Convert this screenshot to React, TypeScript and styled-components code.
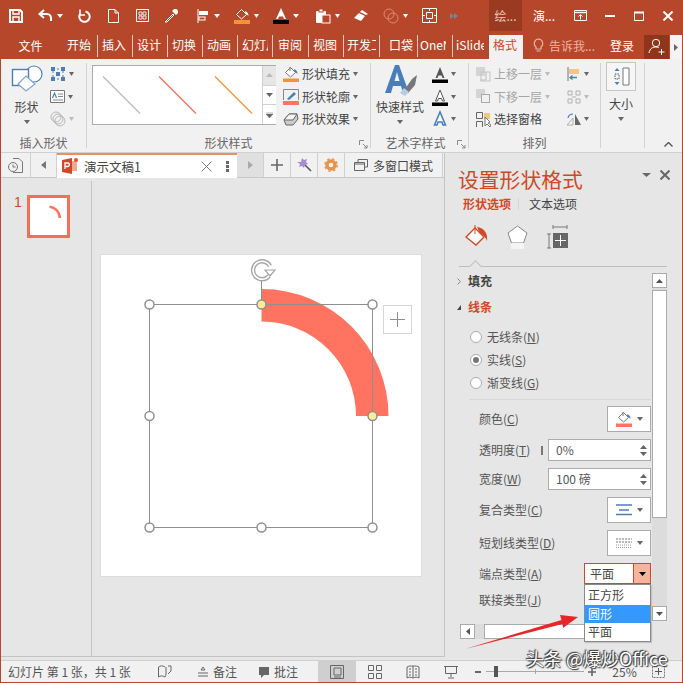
import {FC, ReactNode} from 'react'
import styled, {createGlobalStyle} from 'styled-components'

const RED = '#b7472a'
const ACCENT = '#d24726'
const BLUE = '#4a7ebb'

const Global = createGlobalStyle`
  html, body { margin: 0; padding: 0; }
  body { font-family: "Noto Sans CJK SC", "Liberation Sans", sans-serif; font-size: 12px; color: #444; }
  * { box-sizing: border-box; }
`

const Window = styled.div`
  position: relative;
  width: 683px;
  height: 683px;
  overflow: hidden;
  border: 1px solid ${RED};
  border-top: 0;
  background: #e6e6e6;
  display: flex;
  flex-direction: column;
`

/* title bar */
const TitleBar = styled.div`
  height: 31px;
  flex: none;
  background: ${RED};
  display: flex;
  align-items: stretch;
  color: #fff;
`
const QatSlot = styled.div<{$w: number; $gap?: number}>`
  width: ${p => p.$w}px;
  flex: none;
  display: flex;
  align-items: center;
  justify-content: center;
  gap: ${p => p.$gap ?? 4}px;
`
const Spacer = styled.div`
  flex: 1;
`
const TitleTab = styled.div<{$w: number; $active?: boolean}>`
  width: ${p => p.$w}px;
  flex: none;
  display: flex;
  align-items: center;
  justify-content: center;
  font-size: 12px;
  background: ${p => (p.$active ? '#9a3a21' : 'transparent')};
  color: ${p => (p.$active ? '#e8c9bd' : '#fff')};
`

/* ribbon tabs */
const TabStrip = styled.div`
  height: 28px;
  flex: none;
  background: ${RED};
  display: flex;
  align-items: flex-end;
  color: #fff;
  position: relative;
`
const FileTab = styled.div`
  width: 61px;
  height: 24px;
  padding: 0 2px 3px 0;
  display: flex;
  align-items: center;
  justify-content: center;
  flex: none;
  line-height: 1;
`
const RibbonTab = styled.div<{$w: number; $pl?: number; $sep?: boolean}>`
  width: ${p => p.$w}px;
  flex: none;
  height: 22px;
  margin-bottom: 2px;
  padding: 0 0 3px ${p => p.$pl ?? 4}px;
  display: flex;
  align-items: center;
  white-space: nowrap;
  overflow: hidden;
  line-height: 1;
  border-right: ${p => (p.$sep === false ? '0' : '1px solid #e6c8bf')};
`
const ClipText = styled.span<{$w: number}>`
  width: ${p => p.$w}px;
  flex: none;
  overflow: hidden;
`
const ActiveTab = styled.div`
  width: 34px;
  height: 24px;
  margin-left: 1px;
  flex: none;
  background: #f1f1f1;
  color: ${ACCENT};
  display: flex;
  align-items: center;
  justify-content: center;
  padding: 0 2px 4px 0;
  line-height: 1;
`
const TellMe = styled.div`
  width: 82px;
  height: 24px;
  padding: 0 0 3px 10px;
  display: flex;
  align-items: center;
  gap: 5px;
  color: #eab5a3;
  flex: none;
  white-space: nowrap;
  line-height: 1;
`
const SignIn = styled.div`
  width: 39px;
  height: 24px;
  padding: 0 5px 3px 0;
  display: flex;
  align-items: center;
  justify-content: center;
  flex: none;
  line-height: 1;
`
const ShareBox = styled.div`
  width: 25px;
  height: 24px;
  background: #8f3519;
  display: flex;
  align-items: center;
  justify-content: center;
  flex: none;
`
const ExpandBox = styled.div`
  width: 12px;
  height: 24px;
  margin-left: 1px;
  background: #f4f4f4;
  display: flex;
  align-items: center;
  justify-content: center;
  flex: none;
`

/* ribbon */
const Ribbon = styled.div`
  height: 94px;
  flex: none;
  background: #f1f1f1;
  display: flex;
  border-bottom: 1px solid #d0d0d0;
  position: relative;
`
const Group = styled.div<{$w: number}>`
  position: relative;
  width: ${p => p.$w}px;
  flex: none;
  height: 85px;
  margin-top: 4px;
  border-right: 1px solid #d2d2d2;
  display: flex;
  flex-direction: column;
`
const GroupBody = styled.div<{$pl?: number}>`
  height: 73px;
  flex: none;
  display: flex;
  padding-left: ${p => p.$pl ?? 0}px;
`
const GroupLabel = styled.div`
  height: 12px;
  font-size: 12px;
  line-height: 14px;
  color: #666;
  text-align: center;
  white-space: nowrap;
`
const Launcher = styled.div`
  position: absolute;
  right: 2px;
  bottom: -1px;
  width: 9px;
  height: 9px;
  display: flex;
`
const BigButton = styled.div<{$w: number}>`
  width: ${p => p.$w}px;
  flex: none;
  display: flex;
  flex-direction: column;
  align-items: center;
  color: #444;
  white-space: nowrap;
`
const BigIcon = styled.div`
  height: 36px;
  padding-top: 2px;
  display: flex;
  align-items: flex-start;
  justify-content: center;
`
const BigLabel = styled.div`
  height: 16px;
  line-height: 16px;
`
const BigCaret = styled.div`
  height: 14px;
  display: flex;
  align-items: center;
`
const Stack = styled.div<{$ml?: number}>`
  display: flex;
  flex-direction: column;
  margin-left: ${p => p.$ml ?? 0}px;
`
const SmallRow = styled.div<{$disabled?: boolean}>`
  height: 22.5px;
  display: flex;
  align-items: center;
  gap: 3px;
  white-space: nowrap;
  color: ${p => (p.$disabled ? '#a6a6a6' : '#444')};
`
const RowText = styled.span<{$w?: number}>`
  width: ${p => p.$w ?? 48}px;
  flex: none;
  line-height: 1;
`
const Gallery = styled.div`
  width: 184px;
  height: 60px;
  margin-top: 2px;
  border: 1px solid #ababab;
  background: #fff;
  display: flex;
  flex: none;
`
const GalleryLines = styled.div`
  flex: 1;
  display: flex;
`
const GalleryScroll = styled.div`
  width: 14px;
  flex: none;
  border-left: 1px solid #d0d0d0;
  display: flex;
  flex-direction: column;
`
const GalleryBtn = styled.div<{$dim?: boolean}>`
  flex: 1;
  display: flex;
  align-items: center;
  justify-content: center;
  background: ${p => (p.$dim ? '#e6e6e6' : '#fff')};
  & + & {
    border-top: 1px solid #d0d0d0;
  }
`
const SizeBox = styled.div`
  width: 30px;
  height: 29px;
  margin: -1px 0 5px;
  flex: none;
  border: 1px solid #c6c6c6;
  background: #f6f6f6;
  display: flex;
  align-items: center;
  justify-content: center;
`
const CollapseCell = styled.div`
  flex: 1;
  display: flex;
  align-items: flex-end;
  justify-content: flex-end;
  padding: 0 9px 5px 0;
`

/* main */
const Body = styled.div`
  flex: 1;
  display: flex;
  min-height: 0;
`
const LeftColumn = styled.div`
  width: 444px;
  flex: none;
  margin-bottom: 3px;
  border-right: 1px solid #c4c4c4;
  border-bottom: 1px solid #c4c4c4;
  display: flex;
  flex-direction: column;
`
const DocTabs = styled.div`
  height: 25px;
  flex: none;
  background: #f1f1f1;
  border-bottom: 1px solid #c8c8c8;
  display: flex;
`
const DocCell = styled.div<{$w: number; $dim?: boolean}>`
  width: ${p => p.$w}px;
  flex: none;
  display: flex;
  align-items: center;
  justify-content: center;
  gap: 5px;
  border-right: 1px solid #d0d0d0;
  background: ${p => (p.$dim ? '#e0e0e0' : 'transparent')};
  font-size: 12px;
`
const DocTab = styled.div`
  width: 180px;
  flex: none;
  background: #fff;
  border-top: 2px solid #e8915e;
  margin-bottom: -1px;
  display: flex;
  align-items: center;
  padding: 0 8px 1px 5px;
  gap: 14px;
`
const DocTitle = styled.span`
  flex: 1;
  margin-left: -9px;
  font-size: 12.5px;
  color: #444;
`
const Workspace = styled.div`
  flex: 1;
  display: flex;
  min-height: 0;
`
const ThumbPane = styled.div`
  width: 91px;
  flex: none;
  margin-top: 3px;
  border-right: 1px solid #c4c4c4;
  padding: 14px 0 0 13px;
  display: flex;
  gap: 5px;
  align-items: flex-start;
`
const ThumbNo = styled.span`
  font-size: 14px;
  line-height: 14px;
  color: ${ACCENT};
  font-family: "Liberation Sans", sans-serif;
`
const Thumb = styled.div`
  width: 43px;
  height: 43px;
  border: 3px solid #f0705a;
  background: #fff;
  display: flex;
`
const Stage = styled.div`
  flex: 1;
  padding: 77px 0 0 9px;
`
const Slide = styled.div`
  position: relative;
  width: 320px;
  height: 321px;
  background: #fff;
  box-shadow: 0 0 0 1px #dcdcdc;
  display: flex;
`
const AddButton = styled.div`
  position: absolute;
  left: 282px;
  top: 50px;
  width: 29px;
  height: 29px;
  border: 1px solid #d6d6d6;
  background: #fff;
  display: flex;
  align-items: center;
  justify-content: center;
`

/* format panel */
const Panel = styled.div`
  flex: 1;
  display: flex;
  flex-direction: column;
`
const PanelHead = styled.div`
  height: 40px;
  padding: 12px 12px 0 13px;
  display: flex;
  justify-content: space-between;
  flex: none;
`
const PanelTitle = styled.div`
  font-size: 20.8px;
  line-height: 28px;
  color: ${ACCENT};
  white-space: nowrap;
`
const PanelClose = styled.div`
  display: flex;
  align-items: center;
  gap: 9px;
  height: 20px;
  margin-top: 0;
`
const OptionTabs = styled.div`
  padding-left: 18px;
  height: 21px;
  flex: none;
  display: flex;
  align-items: center;
`
const OptionTab = styled.div<{$active?: boolean}>`
  font-weight: ${p => (p.$active ? 700 : 400)};
  color: ${p => (p.$active ? ACCENT : '#444')};
  width: ${p => (p.$active ? 55 : 52)}px;
  padding-left: ${p => (p.$active ? 0 : 10)}px;
  border-left: ${p => (p.$active ? '0' : '1px solid #d6d6d6')};
  white-space: nowrap;
  line-height: 1;
  box-sizing: content-box;
`
const CategoryIcons = styled.div`
  height: 52px;
  padding: 11px 0 0 20px;
  flex: none;
  display: flex;
  gap: 18px;
`
const NotchLine = styled.div`
  position: relative;
  height: 1px;
  flex: none;
  margin: 0 15px 0 14px;
  background: #bdbdbd;
  &::before {
    content: '';
    position: absolute;
    left: 12px;
    top: -4px;
    width: 8px;
    height: 8px;
    background: #e6e6e6;
    border-left: 1px solid #bdbdbd;
    border-top: 1px solid #bdbdbd;
    transform: rotate(45deg);
  }
`
const PanelBody = styled.div`
  height: 354px;
  flex: none;
  display: flex;
`
const PanelContent = styled.div`
  width: 206px;
  flex: none;
  padding-top: 1px;
`
const SectionHead = styled.div<{$open?: boolean}>`
  height: 26px;
  display: flex;
  align-items: center;
  padding-left: 12px;
  gap: 7px;
  font-weight: 700;
  color: ${p => (p.$open ? ACCENT : '#444')};
  line-height: 1;
`
const Radios = styled.div`
  padding: 5px 0 0 25px;
  display: flex;
  flex-direction: column;
`
const RadioRow = styled.div`
  height: 23px;
  display: flex;
  align-items: center;
  gap: 5px;
  line-height: 1;
  color: #555;
`
const RadioDot = styled.span<{$on?: boolean}>`
  width: 12px;
  height: 12px;
  border-radius: 50%;
  background: #fff;
  border: 1px solid #ababab;
  position: relative;
  &::after {
    content: '';
    display: ${p => (p.$on ? 'block' : 'none')};
    position: absolute;
    inset: 2px;
    border-radius: 50%;
    background: #777;
  }
`
const Divider = styled.div`
  height: 1px;
  background: #d8d8d8;
  margin: 5px 0 6px 24px;
`
const FormRows = styled.div`
  display: flex;
  flex-direction: column;
  gap: 7px;
  padding-left: 34px;
`
const FormRow = styled.div<{$h: number}>`
  height: ${p => p.$h}px;
  display: flex;
  align-items: center;
  justify-content: space-between;
  color: #555;
  line-height: 1;
  white-space: nowrap;
`
const U = styled.span`
  text-decoration: underline;
`
const ColorButton = styled.div`
  width: 44px;
  height: 100%;
  border: 1px solid #ababab;
  background: #fff;
  display: flex;
  align-items: center;
  justify-content: center;
  gap: 5px;
`
const SpinWrap = styled.div`
  display: flex;
  align-items: center;
  gap: 5px;
  height: 100%;
`
const Tick = styled.span`
  width: 1px;
  height: 9px;
  border-left: 2px solid #777;
`
const SpinInput = styled.div`
  width: 103px;
  height: 100%;
  border: 1px solid #ababab;
  background: #fff;
  display: flex;
  align-items: center;
  justify-content: space-between;
  padding: 0 3px 0 7px;
  color: #555;
`
const SpinArrows = styled.div`
  display: flex;
  flex-direction: column;
  gap: 3px;
`
const Combo = styled.div`
  position: relative;
  width: 67px;
  height: 100%;
  border: 1px solid ${ACCENT};
  background: #fff;
  display: flex;
  color: #444;
`
const ComboText = styled.div`
  flex: 1;
  padding-left: 5px;
  display: flex;
  align-items: center;
`
const ComboBtn = styled.div`
  width: 17px;
  flex: none;
  border-left: 1px solid ${ACCENT};
  background: #f4b59c;
  display: flex;
  align-items: center;
  justify-content: center;
`
const Menu = styled.div`
  position: absolute;
  top: calc(100% + 1px);
  right: -1px;
  width: 67px;
  height: 58px;
  background: #fff;
  border: 1px solid #8a8a8a;
  box-shadow: 1px 1px 1px rgba(0, 0, 0, 0.15);
  padding-top: 1px;
  z-index: 3;
`
const MenuItem = styled.div<{$active?: boolean}>`
  height: 18.5px;
  padding-left: 3px;
  display: flex;
  align-items: center;
  line-height: 1;
  color: ${p => (p.$active ? '#fff' : '#444')};
  background: ${p => (p.$active ? '#3399ff' : 'transparent')};
`
const VScroll = styled.div`
  width: 15px;
  flex: none;
  margin: 6px 0 0 1px;
  height: 348px;
  background: #dcdcdc;
  display: flex;
  flex-direction: column;
`
const ScrollBtn = styled.div`
  width: 15px;
  height: 15px;
  flex: none;
  background: #fff;
  border: 1px solid #ababab;
  display: flex;
  align-items: center;
  justify-content: center;
`
const VThumb = styled.div`
  height: 228px;
  margin-top: 2px;
  flex: none;
  background: #fff;
  border: 1px solid #ababab;
`
const HScroll = styled.div`
  height: 15px;
  margin: 3px 0 0 15px;
  width: 192px;
  display: flex;
  background: #dcdcdc;
  flex: none;
`
const HThumb = styled.div`
  width: 110px;
  margin-left: 9px;
  background: #fff;
  border: 1px solid #ababab;
`

/* status bar */
const StatusBar = styled.div`
  height: 22px;
  flex: none;
  background: #f1f1f1;
  border-top: 1px solid #cfcfcf;
  display: flex;
  align-items: center;
  font-size: 12px;
  color: #555;
  white-space: nowrap;
`
const StatusCell = styled.div<{$w: number; $active?: boolean; $left?: boolean}>`
  width: ${p => p.$w}px;
  height: 100%;
  flex: none;
  display: flex;
  align-items: center;
  justify-content: ${p => (p.$left ? 'flex-start' : 'center')};
  padding-left: ${p => (p.$left ? 7 : 0)}px;
  gap: 4px;
  line-height: 1;
  background: ${p => (p.$active ? '#cfcfcf' : 'transparent')};
`
const ZoomTrack = styled.div`
  position: relative;
  width: 98px;
  height: 1px;
  background: #a8a8a8;
  flex: none;
  &::before {
    content: '';
    position: absolute;
    left: 8px;
    top: -5px;
    width: 4px;
    height: 11px;
    background: #555;
  }
  &::after {
    content: '';
    position: absolute;
    left: 49px;
    top: -2px;
    width: 1px;
    height: 5px;
    background: #a8a8a8;
  }
`

/* overlays */
const ArrowLayer = styled.div`
  position: absolute;
  left: 459px;
  top: 610px;
  width: 125px;
  height: 45px;
  display: flex;
  z-index: 4;
`
const Watermark = styled.div`
  position: absolute;
  left: 525px;
  top: 646px;
  font-size: 18px;
  line-height: 24px;
  color: #fff;
  white-space: nowrap;
  text-shadow: 0 0 2px #333, 1px 1px 1px #333, -1px -1px 1px #333;
  z-index: 5;
`

/* icons */
const S: FC<{w: number; h?: number; children: ReactNode}> = ({w, h, children}) => (
  <svg width={w} height={h ?? w} viewBox={`0 0 ${w} ${h ?? w}`} fill="none">
    {children}
  </svg>
)
const Caret: FC<{c?: string; w?: number}> = ({c = '#666', w = 7}) => (
  <S w={w} h={4}>
    <path d={`M0 0H${w}L${w / 2} 4Z`} fill={c} />
  </S>
)
const Up: FC<{c?: string}> = ({c = '#666'}) => (
  <S w={7} h={4}>
    <path d="M0 4H7L3.5 0Z" fill={c} />
  </S>
)
const Fill: FC<{bar: string}> = ({bar}) => (
  <S w={16}>
    <path d="M7.500 1.500 L12.500 6.500 L7.500 11 L2.500 6.500Z" fill="#fff" stroke="#777" />
    <path d="M7 1V5" stroke="#777" />
    <path d="M11 3c3 1 3.600 3 3.400 5-1-1-2-2-3-2.500Z" fill={BLUE} />
    <rect x="0" y="12.500" width="16" height="3.500" fill={bar} />
  </S>
)
const LineA: FC<{outline?: boolean; glow?: boolean}> = ({outline, glow}) => (
  <S w={16} h={18}>
    {glow ? (
      <path d="M8 2 L2.500 15H5L6 12H10L11 15H13.500Z" fill="#fff" stroke={BLUE} strokeWidth={1.6} />
    ) : (
      <>
        <path
          d="M8 2 L3.500 13H5.500L6.500 10.500H9.500L10.500 13H12.500Z"
          fill={outline ? '#fff' : '#555'}
          stroke={outline ? '#555' : 'none'}
        />
        <rect y="14.500" width="16" height="3.500" fill="#000" />
      </>
    )}
  </S>
)
const LauncherIcon: FC = () => (
  <S w={9}>
    <path d="M.500 5V.500H5M4 4 L8 8M5 8H8V5" stroke="#888" />
  </S>
)

const handles = [
  [48.5, 49.5],
  [271.5, 49.5],
  [48.5, 161],
  [48.5, 272.5],
  [160.5, 272.5],
  [271.5, 272.5],
]

const App: FC = () => (
  <Window>
    <Global />
    <TitleBar>
      <QatSlot $w={30}>
        <S w={14}>
          <path d="M1 1H11L13 3V13H1Z" stroke="#fff" strokeWidth={2} />
          <path d="M4 1V5H10V1M4 13V8H10V13" stroke="#fff" strokeWidth={1.4} />
        </S>
      </QatSlot>
      <QatSlot $w={38}>
        <S w={15} h={13}>
          <path d="M6 1 L1.500 5 L6 9" stroke="#fff" strokeWidth={2} />
          <path d="M2 5H9C12.500 5 13.500 8 13 12" stroke="#fff" strokeWidth={2} />
        </S>
        <Caret c="#fff" w={6} />
      </QatSlot>
      <QatSlot $w={30}>
        <S w={14}>
          <path d="M8.500 2.500A5.200 5.200 0 1 1 3 5" stroke="#fff" strokeWidth={2} />
          <path d="M3 0.500V6H8" stroke="#fff" strokeWidth={1.6} />
        </S>
      </QatSlot>
      <QatSlot $w={28}>
        <S w={11} h={14}>
          <path d="M.500.500H7L10.500 4V13.500H.500ZM7 .500V4H10.500" stroke="#fff" />
        </S>
      </QatSlot>
      <QatSlot $w={30}>
        <S w={13}>
          <path d="M.500.500H12.500V12.500H.500Z" stroke="#fff" />
          <path d="M3 3H6V6H3ZM7 3H10V6H7ZM3 7H6V10H3ZM7 7H10V10H7Z" stroke="#fff" strokeWidth={0.8} />
        </S>
      </QatSlot>
      <QatSlot $w={28}>
        <S w={15}>
          <path d="M9 6 L2 13 L1 14 L3 14 L10 7Z" stroke="#fff" fill="none" />
          <path d="M8 3 L12 7 L14 5 L14 2.500 L12.500 1 L10 1Z" fill="#fff" />
        </S>
      </QatSlot>
      <QatSlot $w={46}>
        <S w={13} h={14}>
          <path d="M1 0V14" stroke="#fff" />
          <rect x="2" y="2" width="9" height="4" fill="#fff" />
          <rect x="2" y="8" width="6" height="3" fill="none" stroke="#fff" />
        </S>
        <Caret c="#fff" w={6} />
      </QatSlot>
      <QatSlot $w={30}>
        <S w={16}>
          <path d="M7.500 1.500 L12.500 6.500 L7.500 11 L2.500 6.500Z" fill="none" stroke="#fff" />
          <path d="M11 3c3 1 3.600 3 3.400 5-1-1-2-2-3-2.500Z" fill="#fff" />
          <rect y="12" width="16" height="4" fill="#f29436" />
        </S>
        <Caret c="#fff" w={5} />
      </QatSlot>
      <QatSlot $w={50}>
        <S w={16}>
          <path d="M8 0 L3 11H5L6 8.500H10L11 11H13Z" fill="#fff" />
          <rect y="12" width="16" height="4" fill="#000" />
        </S>
        <Caret c="#fff" w={6} />
      </QatSlot>
      <QatSlot $w={32}>
        <S w={16}>
          <rect x="1" y="3" width="10" height="12" rx="1" fill="#fff" />
          <rect x="4" y="1" width="4" height="3" fill="#fff" stroke={RED} />
          <rect x="7" y="7" width="8" height="8" fill={RED} stroke="#fff" />
        </S>
        <Caret c="#fff" w={5} />
      </QatSlot>
      <QatSlot $w={36}>
        <S w={16} h={13}>
          <path d="M9 1 L15 5 L13 6 L7 3Z" fill="#fff" />
          <path d="M6 4 L12 7 L8 12 L1 9Z" fill="#fff" />
        </S>
      </QatSlot>
      <QatSlot $w={32}>
        <S w={16}>
          <circle cx="6" cy="6" r="5" stroke="#d98b74" />
          <circle cx="10" cy="10" r="5" stroke="#d98b74" />
        </S>
        <Caret c="#fff" w={5} />
      </QatSlot>
      <QatSlot $w={36}>
        <S w={15}>
          <path d="M.500.500H14.500V14.500H.500Z" stroke="#fff" />
          <path d="M4.500 4.500H10.500V10.500H4.500Z" stroke="#fff" />
          <path d="M7.500 1V3M7.500 12V14M1 7.500H3M12 7.500H14" stroke="#fff" />
        </S>
      </QatSlot>
      <QatSlot $w={14} $gap={0}>
        <S w={8}>
          <path d="M0 1 L4 4 L0 7ZM4 1 L8 4 L4 7Z" fill="#6f8a94" />
        </S>
      </QatSlot>
      <Spacer />
      <TitleTab $w={33} $active>
        绘...
      </TitleTab>
      <TitleTab $w={44}>演...</TitleTab>
      <QatSlot $w={29}>
        <S w={13} h={11}>
          <path d="M.500.500H12.500V10.500H.500Z" stroke="#fff" />
          <path d="M.500 2.500H12.500" stroke="#fff" strokeWidth={1.4} />
          <path d="M6.500 9.500V5M4.500 6.500 L6.500 4.500 L8.500 6.500" stroke="#fff" />
        </S>
      </QatSlot>
      <QatSlot $w={29}>
        <S w={10} h={2}>
          <rect width="10" height="2" fill="#fff" />
        </S>
      </QatSlot>
      <QatSlot $w={29}>
        <S w={10} h={10}>
          <path d="M.500 1.500H9.500V9.500H.500Z" stroke="#fff" />
          <path d="M0 1.500H10" stroke="#fff" strokeWidth={2} />
        </S>
      </QatSlot>
      <QatSlot $w={29}>
        <S w={10}>
          <path d="M.500.500 L9.500 9.500M9.500.500 L.500 9.500" stroke="#fff" strokeWidth={2} />
        </S>
      </QatSlot>
    </TitleBar>

    <TabStrip>
      <FileTab>文件</FileTab>
      <RibbonTab $w={36} $pl={5}>开始</RibbonTab>
      <RibbonTab $w={35}>插入</RibbonTab>
      <RibbonTab $w={35}>设计</RibbonTab>
      <RibbonTab $w={35}>切换</RibbonTab>
      <RibbonTab $w={35}>动画</RibbonTab>
      <RibbonTab $w={35}>
        <ClipText $w={26}>幻灯片</ClipText>
      </RibbonTab>
      <RibbonTab $w={36} $pl={5}>审阅</RibbonTab>
      <RibbonTab $w={35}>视图</RibbonTab>
      <RibbonTab $w={36} $pl={3}>
        <ClipText $w={29}>开发工</ClipText>
      </RibbonTab>
      <RibbonTab $w={38} $pl={9}>口袋</RibbonTab>
      <RibbonTab $w={35} $pl={2}>
        <ClipText $w={26}>OneNote</ClipText>
      </RibbonTab>
      <RibbonTab $w={35} $pl={3} $sep={false}>
        <ClipText $w={28}>iSlide</ClipText>
      </RibbonTab>
      <ActiveTab>格式</ActiveTab>
      <TellMe>
        <S w={11} h={15}>
          <path
            d="M5.500 1A4.500 4.500 0 0 1 8 9V11H3V9A4.500 4.500 0 0 1 5.500 1ZM3.500 13H7.500"
            stroke="#eab5a3"
            strokeWidth={1.2}
          />
        </S>
        告诉我...
      </TellMe>
      <SignIn>登录</SignIn>
      <ShareBox>
        <S w={18}>
          <circle cx="8" cy="5" r="3.700" stroke="#fff" />
          <path d="M1 15C2 10 5 9 8 9C9.500 9 10.500 9.500 11 10" stroke="#fff" />
          <path d="M13.500 11V17M10.500 14H16.500" stroke="#fff" />
        </S>
      </ShareBox>
      <ExpandBox>
        <S w={4} h={7}>
          <path d="M0 0 L4 3.500 L0 7Z" fill="#666" />
        </S>
      </ExpandBox>
    </TabStrip>

    <Ribbon>
      <Group $w={86}>
        <GroupBody $pl={2}>
          <BigButton $w={47}>
            <BigIcon>
              <S w={32} h={27}>
                <circle cx="23" cy="9" r="8" fill="#fff" stroke={BLUE} strokeWidth={1.2} />
                <rect x="1.500" y="4.500" width="16" height="16" fill="#fff" stroke={BLUE} strokeWidth={1.4} />
                <path d="M15 11 L24 19 L15 26 L7 19Z" fill="#fff" stroke="#7ea6d4" strokeWidth={1.2} />
              </S>
            </BigIcon>
            <BigLabel>形状</BigLabel>
            <BigCaret>
              <Caret w={6} />
            </BigCaret>
          </BigButton>
          <Stack>
            <SmallRow>
              <S w={16}>
                <path d="M3 3H13V13H3Z" stroke={BLUE} strokeDasharray="2 2" />
                <path d="M1 1H5V5H1ZM11 1H15V5H11ZM1 11H5V15H1ZM11 11H15V15H11ZM6 6H10V10H6Z" fill={BLUE} />
              </S>
              <Caret w={5} />
            </SmallRow>
            <SmallRow>
              <S w={15} h={13}>
                <path d="M.500.500H14.500V12.500H.500Z" stroke="#777" fill="#fff" />
                <path d="M2.500 8 L4.500 3 L6.500 8" stroke={BLUE} strokeWidth={1.2} />
                <path d="M8 4H13M8 6.500H13M3 10H13" stroke="#888" />
              </S>
              <Caret w={5} />
            </SmallRow>
            <SmallRow>
              <S w={16}>
                <circle cx="6" cy="6" r="5" stroke="#b8b8b8" />
                <circle cx="10" cy="10" r="5" stroke="#b8b8b8" />
                <circle cx="8" cy="8" r="5" stroke="#b8b8b8" />
              </S>
              <Caret c="#bbb" w={5} />
            </SmallRow>
          </Stack>
        </GroupBody>
        <GroupLabel>插入形状</GroupLabel>
      </Group>

      <Group $w={284}>
        <GroupBody $pl={5}>
          <Gallery>
            <GalleryLines>
              <S w={169} h={58}>
                <path d="M10 10.500 L47 47.500" stroke="#bdbdbd" strokeWidth={1.4} />
                <path d="M66 10.500 L103 47.500" stroke="#ff7360" strokeWidth={1.4} />
                <path d="M122 10.500 L159 47.500" stroke="#f79a3a" strokeWidth={1.4} />
              </S>
            </GalleryLines>
            <GalleryScroll>
              <GalleryBtn $dim>
                <Up c="#bbb" />
              </GalleryBtn>
              <GalleryBtn>
                <Caret />
              </GalleryBtn>
              <GalleryBtn>
                <S w={7} h={6}>
                  <path d="M0 0H7M0 2H7L3.500 6Z" fill="#666" stroke="#666" strokeWidth={0.5} />
                </S>
              </GalleryBtn>
            </GalleryScroll>
          </Gallery>
          <Stack $ml={7}>
            <SmallRow>
              <Fill bar="#f29436" />
              <RowText>形状填充</RowText>
              <Caret w={5} />
            </SmallRow>
            <SmallRow>
              <S w={16}>
                <path d="M.500.500H15.500V11" stroke="#888" />
                <path d="M.500.500V11" stroke="#888" />
                <path d="M4 10 L11 3 L13 5 L6 11Z" fill={BLUE} />
                <rect y="12" width="16" height="4" fill="#ff7360" />
              </S>
              <RowText>形状轮廓</RowText>
              <Caret w={5} />
            </SmallRow>
            <SmallRow>
              <S w={16}>
                <path d="M1 9 L6 3H14 L15 8 L10 14H3Z" fill="#ccc" stroke="#666" />
                <path d="M6 3 L14 3 L10 9 L1 9Z" fill="#f4f4f4" stroke="#666" />
              </S>
              <RowText>形状效果</RowText>
              <Caret w={5} />
            </SmallRow>
          </Stack>
        </GroupBody>
        <GroupLabel>形状样式</GroupLabel>
        <Launcher>
          <LauncherIcon />
        </Launcher>
      </Group>

      <Group $w={98}>
        <GroupBody $pl={1}>
          <BigButton $w={56}>
            <BigIcon>
              <S w={36} h={32}>
                <path d="M13 0 L3 28H9L11 21H19L21 28H27L17 0ZM12.500 16 L15 7 L17.500 16Z" fill={BLUE} />
                <path d="M35 10 L30 14 L23 24 L27 27 L33 20Z" fill="#777" />
                <path d="M18 28 L22 23 L27 27 L23 31Z" fill="#b7cce6" />
              </S>
            </BigIcon>
            <BigLabel>快速样式</BigLabel>
            <BigCaret>
              <Caret w={6} />
            </BigCaret>
          </BigButton>
          <Stack $ml={4}>
            <SmallRow>
              <LineA />
              <Caret w={5} />
            </SmallRow>
            <SmallRow>
              <LineA outline />
              <Caret w={5} />
            </SmallRow>
            <SmallRow>
              <LineA glow />
              <Caret w={5} />
            </SmallRow>
          </Stack>
        </GroupBody>
        <GroupLabel>艺术字样式&nbsp;&nbsp;&nbsp;</GroupLabel>
        <Launcher>
          <LauncherIcon />
        </Launcher>
      </Group>

      <Group $w={132}>
        <GroupBody $pl={7}>
          <Stack>
            <SmallRow $disabled>
              <S w={15}>
                <rect width="9" height="9" fill="#d4d4d4" />
                <path d="M10 5V13H4" stroke="#bbb" />
                <rect x="5" y="5" width="9" height="9" stroke="#c4c4c4" />
              </S>
              <RowText>上移一层</RowText>
              <Caret c="#bbb" w={5} />
            </SmallRow>
            <SmallRow $disabled>
              <S w={15}>
                <rect width="9" height="9" fill="#d4d4d4" />
                <rect x="5.500" y="5.500" width="8" height="8" fill="#f1f1f1" stroke="#a8a8a8" />
              </S>
              <RowText>下移一层</RowText>
              <Caret c="#bbb" w={5} />
            </SmallRow>
            <SmallRow>
              <S w={15}>
                <path d="M.500.500H6.500V6.500H.500ZM.500 9.500H6.500V15.500H.500Z" stroke="#666" />
                <rect x="8" y="1" width="6" height="6" fill="#f3c67f" />
                <path d="M9 5V14 L11 12 L14 15 L15 13 L12 11 L14 10Z" fill="#fff" stroke="#777" />
              </S>
              <RowText>选择窗格</RowText>
            </SmallRow>
          </Stack>
          <Stack $ml={17}>
            <SmallRow>
              <S w={14}>
                <path d="M1 0V14" stroke="#777" />
                <rect x="2" y="2" width="10" height="5" fill="#f3c67f" />
                <path d="M10 10.500H3M5.500 8.500 L3 10.500 L5.500 12.500" stroke={BLUE} strokeWidth={1.3} />
              </S>
              <Caret w={5} />
            </SmallRow>
            <SmallRow>
              <S w={14}>
                <path d="M1 1H5V5H1ZM9 1H13V5H9ZM1 9H5V13H1ZM9 9H13V13H9Z" stroke="#b0b0b0" />
                <path d="M5 7H9" stroke="#b0b0b0" />
              </S>
              <Caret c="#bbb" w={5} />
            </SmallRow>
            <SmallRow>
              <S w={14}>
                <path d="M8 2 L14 13H8Z" fill="#666" />
                <path d="M6 6V13H0Z" stroke="#b0b0b0" />
                <path d="M1 6C1.500 3 3 2 6 2" stroke={BLUE} strokeWidth={1.2} />
              </S>
              <Caret w={5} />
            </SmallRow>
          </Stack>
        </GroupBody>
        <GroupLabel>排列</GroupLabel>
      </Group>

      <Group $w={44}>
        <GroupBody $pl={5}>
          <BigButton $w={30}>
            <SizeBox>
              <S w={17} h={19}>
                <path d="M10 1H16V18H10Z" stroke="#777" fill="#fff" />
                <path d="M4 1 L6.500 4H1.500ZM4 18 L6.500 15H1.500Z" fill={BLUE} />
                <path d="M2 7H6V12H2Z" stroke="#555" strokeDasharray="1.500 1" />
              </S>
            </SizeBox>
            <BigLabel>大小</BigLabel>
            <BigCaret>
              <Caret w={6} />
            </BigCaret>
          </BigButton>
        </GroupBody>
      </Group>
      <CollapseCell>
        <S w={9} h={5}>
          <path d="M.500 4.500 L4.500 .500 L8.500 4.500" stroke="#555" strokeWidth={1.4} />
        </S>
      </CollapseCell>
    </Ribbon>

    <Body>
      <LeftColumn>
        <DocTabs>
          <DocCell $w={30}>
            <S w={15}>
              <path d="M5 .500H11L14.500 4V14.500H5" stroke="#777" />
              <circle cx="5" cy="9" r="4.500" fill="#f1f1f1" stroke="#777" />
              <path d="M5 6.500V9H7.500" stroke="#777" />
            </S>
          </DocCell>
          <DocCell $w={26}>
            <S w={5} h={8}>
              <path d="M5 0 L0 4 L5 8Z" fill="#777" />
            </S>
          </DocCell>
          <DocTab>
            <S w={17}>
              <path d="M0 2 L10 0V16 L0 14Z" fill="#d24726" />
              <path d="M10 3H15V13H10Z" fill="#f3a98e" />
              <path d="M3 11V5H6A1.800 1.800 0 0 1 6 8.500H3" stroke="#fff" strokeWidth={1.3} />
              <circle cx="14" cy="2" r="2" fill="#e8501f" />
            </S>
            <DocTitle>演示文稿1</DocTitle>
            <S w={11}>
              <path d="M.500.500 L10.500 10.500M10.500.500 L.500 10.500" stroke="#777" />
            </S>
            <S w={3} h={11}>
              <path d="M0 0H3V3H0ZM0 4H3V7H0ZM0 8H3V11H0Z" fill="#666" />
            </S>
          </DocTab>
          <DocCell $w={27} $dim>
            <S w={5} h={8}>
              <path d="M0 0 L5 4 L0 8Z" fill="#aaa" />
            </S>
          </DocCell>
          <DocCell $w={27}>
            <S w={12}>
              <path d="M6 0V12M0 6H12" stroke="#666" strokeWidth={1.6} />
            </S>
          </DocCell>
          <DocCell $w={27}>
            <S w={16}>
              <path d="M9 8 L15 14" stroke="#555" strokeWidth={1.6} />
              <path d="M6 1 L8 3 L11 2 L10 5 L12 7 L9 8 L8 11 L6 9 L3 10 L4 7 L1 5 L5 5Z" fill="#a98ad6" />
            </S>
          </DocCell>
          <DocCell $w={27}>
            <S w={14}>
              <circle cx="7" cy="7" r="4" stroke="#e8934a" strokeWidth={3.4} />
              <circle cx="7" cy="7" r="6.200" stroke="#e8934a" strokeWidth={1.4} strokeDasharray="2.500 2.400" />
            </S>
          </DocCell>
          <DocCell $w={98}>
            <S w={14} h={12}>
              <path d="M4 3V.500H13.500V8H10.500" stroke="#666" />
              <path d="M.500 3.500H10.500V11.500H.500Z" stroke="#666" />
              <path d="M.500 5H10.500" stroke="#666" />
            </S>
            多窗口模式
          </DocCell>
        </DocTabs>
        <Workspace>
          <ThumbPane>
            <ThumbNo>1</ThumbNo>
            <Thumb>
              <S w={37}>
                <path d="M19.500 7.500A12.500 12.500 0 0 1 31 20H28.500A10 10 0 0 0 19.500 10Z" fill="#ff7360" />
              </S>
            </Thumb>
          </ThumbPane>
          <Stage>
            <Slide>
              <S w={320} h={321}>
                <path d="M160.500 34A127 127 0 0 1 287.500 161H255A94.500 94.500 0 0 0 160.500 66.500Z" fill="#ff7360" />
                <path d="M48.500 49.500H271.500V272.500H48.500Z" stroke="#8f8f8f" strokeWidth={1} />
                <path d="M160.500 49V24" stroke="#8f8f8f" />
                <path d="M168 21A9 9 0 1 1 169 11" stroke="#a6a6a6" strokeWidth={4.4} />
                <path d="M168 21A9 9 0 1 1 169 11" stroke="#fff" strokeWidth={1.6} />
                <path d="M164 15H174L169 21Z" fill="#fff" stroke="#a6a6a6" strokeWidth={1.2} />
                {handles.map(([x, y]) => (
                  <circle key={`${x}-${y}`} cx={x} cy={y} r={4.5} fill="#fff" stroke="#8f8f8f" strokeWidth={1.5} />
                ))}
                <circle cx="160.500" cy="49.500" r="4.500" fill="#ffec99" stroke="#8f8f8f" strokeWidth={1.5} />
                <circle cx="271.500" cy="161" r="4.500" fill="#ffec99" stroke="#8f8f8f" strokeWidth={1.5} />
              </S>
              <AddButton>
                <S w={15}>
                  <path d="M7.500 0V15M0 7.500H15" stroke="#8f8f8f" />
                </S>
              </AddButton>
            </Slide>
          </Stage>
        </Workspace>
      </LeftColumn>

      <Panel>
        <PanelHead>
          <PanelTitle>设置形状格式</PanelTitle>
          <PanelClose>
            <Caret w={9} />
            <S w={10}>
              <path d="M.500.500 L9.500 9.500M9.500.500 L.500 9.500" stroke="#666" strokeWidth={2} />
            </S>
          </PanelClose>
        </PanelHead>
        <OptionTabs>
          <OptionTab $active>形状选项</OptionTab>
          <OptionTab>文本选项</OptionTab>
        </OptionTabs>
        <CategoryIcons>
          <S w={24} h={24}>
            <path d="M10 3 L19 12 L11 20 L1 12Z" fill="#fff" stroke={ACCENT} strokeWidth={1.4} />
            <path d="M10 0V9" stroke={ACCENT} />
            <path d="M12 2C19 3 23 8 22 16C21 13 19 10 15 8Z" fill={ACCENT} />
          </S>
          <S w={21} h={24}>
            <path d="M10.500 1 L20 8 L16.500 18H4.500L1 8Z" fill="#fff" stroke="#888" />
            <path d="M4.500 18V24M16.500 18V24" stroke="#aaa" />
            <rect x="4" y="18" width="13" height="6" fill="#f4f4f4" />
          </S>
          <S w={22} h={24}>
            <path d="M7 2H21M7 0V4M21 0V4" stroke="#777" />
            <path d="M1 9H5M1 23H5M3 9V23" stroke="#777" />
            <rect x="7" y="8" width="15" height="15" fill="#666" />
            <path d="M14.500 10V21M9 15.500H20" stroke="#fff" />
          </S>
        </CategoryIcons>
        <NotchLine />
        <PanelBody>
          <PanelContent>
            <SectionHead>
              <S w={4} h={7}>
                <path d="M.500.500 L3.500 3.500 L.500 6.500" stroke="#888" />
              </S>
              填充
            </SectionHead>
            <SectionHead $open>
              <S w={4} h={7}>
                <path d="M4 1V6H0Z" fill="#444" />
              </S>
              线条
            </SectionHead>
            <Radios>
              <RadioRow>
                <RadioDot />
                <span>
                  无线条(<U>N</U>)
                </span>
              </RadioRow>
              <RadioRow>
                <RadioDot $on />
                <span>
                  实线(<U>S</U>)
                </span>
              </RadioRow>
              <RadioRow>
                <RadioDot />
                <span>
                  渐变线(<U>G</U>)
                </span>
              </RadioRow>
            </Radios>
            <Divider />
            <FormRows>
              <FormRow $h={26}>
                <span>
                  颜色(<U>C</U>)
                </span>
                <ColorButton>
                  <Fill bar="#ff7360" />
                  <Caret w={6} />
                </ColorButton>
              </FormRow>
              <FormRow $h={22}>
                <span>
                  透明度(<U>T</U>)
                </span>
                <SpinWrap>
                  <Tick />
                  <SpinInput>
                    0%
                    <SpinArrows>
                      <Up />
                      <Caret />
                    </SpinArrows>
                  </SpinInput>
                </SpinWrap>
              </FormRow>
              <FormRow $h={22}>
                <span>
                  宽度(<U>W</U>)
                </span>
                <SpinInput>
                  100 磅
                  <SpinArrows>
                    <Up />
                    <Caret />
                  </SpinArrows>
                </SpinInput>
              </FormRow>
              <FormRow $h={26}>
                <span>
                  复合类型(<U>C</U>)
                </span>
                <ColorButton>
                  <S w={16} h={12}>
                    <path d="M0 1H16M3 6H13M0 10.500H16" stroke={BLUE} strokeWidth={1.6} />
                  </S>
                  <Caret w={6} />
                </ColorButton>
              </FormRow>
              <FormRow $h={26}>
                <span>
                  短划线类型(<U>D</U>)
                </span>
                <ColorButton>
                  <S w={16} h={10}>
                    <path d="M0 1H16M0 4H16" stroke="#777" strokeDasharray="2 1" />
                    <path d="M0 7H16M0 9.500H16" stroke="#999" strokeDasharray="1 1" />
                  </S>
                  <Caret w={6} />
                </ColorButton>
              </FormRow>
              <FormRow $h={21}>
                <span>
                  端点类型(<U>A</U>)
                </span>
                <Combo>
                  <ComboText>平面</ComboText>
                  <ComboBtn>
                    <Caret c="#000" />
                  </ComboBtn>
                  <Menu>
                    <MenuItem>正方形</MenuItem>
                    <MenuItem $active>圆形</MenuItem>
                    <MenuItem>平面</MenuItem>
                  </Menu>
                </Combo>
              </FormRow>
              <FormRow $h={18}>
                <span>
                  联接类型(<U>J</U>)
                </span>
              </FormRow>
            </FormRows>
          </PanelContent>
          <VScroll>
            <ScrollBtn>
              <Up c="#555" />
            </ScrollBtn>
            <VThumb />
            <Spacer />
            <ScrollBtn>
              <Caret c="#555" />
            </ScrollBtn>
          </VScroll>
        </PanelBody>
        <HScroll>
          <ScrollBtn>
            <S w={4} h={7}>
              <path d="M4 0 L0 3.500 L4 7Z" fill="#555" />
            </S>
          </ScrollBtn>
          <HThumb />
        </HScroll>
      </Panel>
    </Body>

    <StatusBar>
      <StatusCell $w={149} $left>
        幻灯片 第 1 张，共 1 张
      </StatusCell>
      <StatusCell $w={30}>
        <S w={14}>
          <path d="M7 2C5 .500 2 .500 .500 2V12C2 10.500 5 10.500 7 12C7.500 11 8 10 8 9V2" stroke="#666" />
          <path d="M10 1H13V6L10 9" stroke="#666" />
        </S>
      </StatusCell>
      <StatusCell $w={74}>
        <S w={12}>
          <path d="M6 1 L8 4H4ZM1 7H11M1 10H11" stroke="#666" />
        </S>
        备注
      </StatusCell>
      <StatusCell $w={48}>
        <S w={12}>
          <path d="M1 1H11V9H6L3 12V9H1Z" fill="#666" />
        </S>
        批注
      </StatusCell>
      <StatusCell $w={16} />
      <StatusCell $w={38} $active>
        <S w={14}>
          <path d="M.500.500H13.500V13.500H.500ZM4 3H11V10H4ZM4 12H11" stroke="#666" />
        </S>
      </StatusCell>
      <StatusCell $w={38}>
        <S w={14}>
          <path d="M.500.500H5.500V5.500H.500ZM8.500.500H13.500V5.500H8.500ZM.500 8.500H5.500V13.500H.500ZM8.500 8.500H13.500V13.500H8.500Z" stroke="#666" />
        </S>
      </StatusCell>
      <StatusCell $w={38}>
        <S w={14}>
          <path d="M7 1C5 1 2 1 1 2V13C2 12 5 12 7 13C9 12 12 12 13 13V2C12 1 9 1 7 1ZM7 1V13M3 4H5M3 7H5M3 10H5M9 4H11M9 7H11M9 10H11" stroke="#666" />
        </S>
      </StatusCell>
      <StatusCell $w={38}>
        <S w={14}>
          <path d="M0 1.500H14M1.500 1.500H12.500V8.500H1.500ZM7 8.500V12M4 13H10" stroke="#666" />
        </S>
      </StatusCell>
      <StatusCell $w={16}>
        <S w={6} h={2}>
          <rect width="6" height="2" fill="#666" />
        </S>
      </StatusCell>
      <ZoomTrack />
      <StatusCell $w={16}>
        <S w={8}>
          <path d="M4 0V8M0 4H8" stroke="#666" strokeWidth={1.6} />
        </S>
      </StatusCell>
      <StatusCell $w={49}>25%</StatusCell>
      <StatusCell $w={18}>
        <S w={13}>
          <path d="M.500.500H12.500V12.500H.500Z" stroke="#777" strokeDasharray="2 1" />
          <path d="M6.500 3V10M3 6.500H10" stroke="#555" />
        </S>
      </StatusCell>
    </StatusBar>

    <ArrowLayer>
      <S w={125} h={45}>
        <path d="M5 39 L101.500 10 L100 5 L118 7 L103 18 L102.500 14Z" fill="#e8262a" />
      </S>
    </ArrowLayer>
    <Watermark>头条 @爆炒Office</Watermark>
  </Window>
)

export default App
